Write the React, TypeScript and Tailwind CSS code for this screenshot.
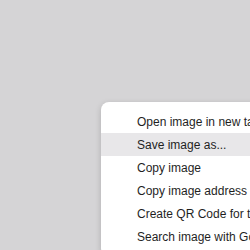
const items = [
  "Open image in new tab",
  "Save image as...",
  "Copy image",
  "Copy image address",
  "Create QR Code for this image",
  "Search image with Google",
];

export default function App() {
  return (
    <div className="w-[250px] h-[250px] overflow-hidden bg-[#d5d4d6] pt-[102px] pl-[101px]">
      <div className="w-[260px] rounded-[8px] bg-white py-[8px] shadow-[0_2px_6px_rgba(0,0,0,0.18)] text-[#1f1f1f] text-[12px] leading-[23px] font-['Liberation_Sans',Arial,sans-serif]">
        {items.map((t, i) => (
          <div
            key={t}
            className={`h-[23px] pl-[36px] pt-px whitespace-nowrap ${i === 1 ? "bg-[#e8e7e9]" : ""}`}
          >
            {t}
          </div>
        ))}
      </div>
    </div>
  );
}
